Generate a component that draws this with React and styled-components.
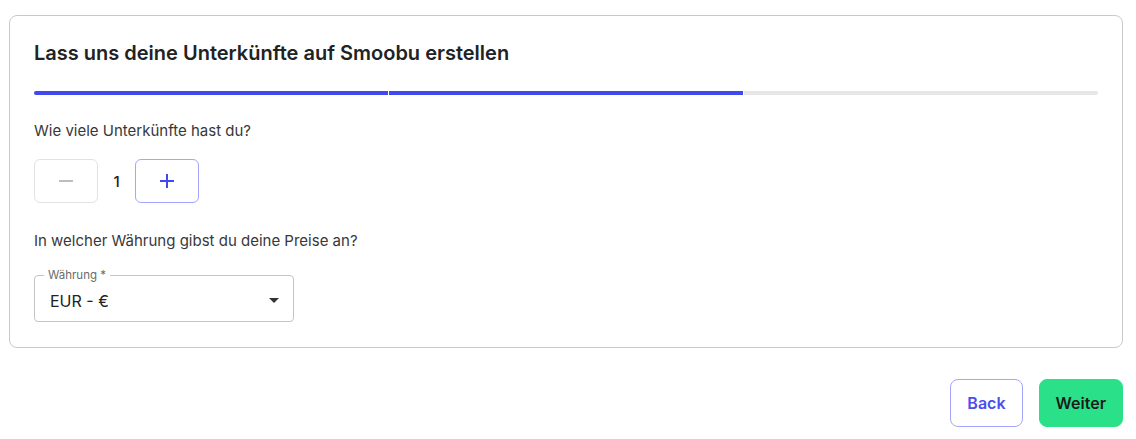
import React, { useState } from "react";
import styled, { createGlobalStyle } from "styled-components";

const GlobalStyle = createGlobalStyle`
	body {
		margin: 0;
		background: #ffffff;
		font-family: "Inter", "Noto Sans", sans-serif;
		color: #222222;
	}
`;

const Page = styled.div`
	padding: 15px 13px 0 9px;
	display: flex;
	flex-direction: column;
`;

const Card = styled.section`
	border: 1px solid #c9c9c9;
	border-radius: 8px;
	padding: 23px 24px 25px 24px;
	display: flex;
	flex-direction: column;
`;

const Title = styled.h2`
	margin: 0;
	font-size: 20px;
	line-height: 28px;
	font-weight: 600;
	color: #222222;
	letter-spacing: 0;
`;

const Progress = styled.div`
	margin-top: 24px;
	display: grid;
	grid-template-columns: repeat(3, 1fr);
	gap: 1px;
`;

const Segment = styled.div`
	height: 4px;
	background: ${(p) => (p.$done ? "#4049f0" : "#e6e6e6")};
	border-radius: ${(p) => (p.$first ? "2px 0 0 2px" : p.$last ? "0 2px 2px 0" : "0")};
`;

const Question = styled.p`
	margin: 25px 0 0 0;
	font-size: 15px;
	line-height: 22px;
	color: #383838;
	font-weight: 400;
`;

const Stepper = styled.div`
	margin-top: 17px;
	display: flex;
	align-items: center;
`;

const StepButton = styled.button`
	width: 64px;
	height: 44px;
	border-radius: 6px;
	background: #ffffff;
	border: 1px solid ${(p) => (p.$active ? "#a3a6fb" : "#e2e2e2")};
	display: flex;
	align-items: center;
	justify-content: center;
	padding: 0;
	cursor: pointer;
`;

const Count = styled.span`
	width: 37px;
	text-align: center;
	font-size: 15px;
	font-weight: 500;
	color: #222222;
`;

const CurrencyQuestion = styled(Question)`
	margin-top: 27px;
`;

const SelectBox = styled.fieldset`
	margin: 17px 0 0 0;
	width: 260px;
	box-sizing: border-box;
	border: 1px solid #c4c4c4;
	border-radius: 4px;
	padding: 0 15px;
	min-width: 0;
`;

const SelectLabel = styled.legend`
	font-size: 11.5px;
	line-height: 12px;
	color: #6b6b6b;
	padding: 0 4px;
	margin-left: -6px;
`;

const SelectRow = styled.div`
	height: 41px;
	display: flex;
	align-items: center;
	justify-content: space-between;
	margin-top: -1px;
`;

const SelectValue = styled.span`
	font-size: 16px;
	color: #222222;
`;

const Caret = styled.span`
	width: 0;
	height: 0;
	border-left: 5px solid transparent;
	border-right: 5px solid transparent;
	border-top: 5px solid #333333;
	margin-right: -1px;
`;

const Footer = styled.div`
	margin-top: 31px;
	display: flex;
	justify-content: flex-end;
	gap: 16px;
`;

const ActionButton = styled.button`
	height: 48px;
	padding: 0 16px;
	border-radius: 8px;
	font-family: "Inter", "Noto Sans", sans-serif;
	font-size: 16px;
	font-weight: 600;
	cursor: pointer;
	background: ${(p) => (p.$primary ? "#2ae18a" : "#ffffff")};
	color: ${(p) => (p.$primary ? "#1b1b1b" : "#4a4ef0")};
	border: 1px solid ${(p) => (p.$primary ? "#2ae18a" : "#a3a6fb")};
`;

function MinusIcon() {
	return (
		<svg width="16" height="16" viewBox="0 0 16 16">
			<path d="M1 8h14" stroke="#bdbdbd" strokeWidth="2" />
		</svg>
	);
}

function PlusIcon() {
	return (
		<svg width="16" height="16" viewBox="0 0 16 16">
			<path d="M1 8h14M8 1v14" stroke="#4049f0" strokeWidth="2" />
		</svg>
	);
}

function App() {
	const [count, setCount] = useState(1);
	const steps = [true, true, false];

	return (
		<Page>
			<GlobalStyle />
			<Card>
				<Title>Lass uns deine Unterkünfte auf Smoobu erstellen</Title>
				<Progress>
					{steps.map((done, i) => (
						<Segment key={i} $done={done} $first={i === 0} $last={i === steps.length - 1} />
					))}
				</Progress>
				<Question>Wie viele Unterkünfte hast du?</Question>
				<Stepper>
					<StepButton onClick={() => setCount(Math.max(1, count - 1))}>
						<MinusIcon />
					</StepButton>
					<Count>{count}</Count>
					<StepButton $active onClick={() => setCount(count + 1)}>
						<PlusIcon />
					</StepButton>
				</Stepper>
				<CurrencyQuestion>In welcher Währung gibst du deine Preise an?</CurrencyQuestion>
				<SelectBox>
					<SelectLabel>Währung *</SelectLabel>
					<SelectRow>
						<SelectValue>EUR - €</SelectValue>
						<Caret />
					</SelectRow>
				</SelectBox>
			</Card>
			<Footer>
				<ActionButton>Back</ActionButton>
				<ActionButton $primary>Weiter</ActionButton>
			</Footer>
		</Page>
	);
}

export default App;
